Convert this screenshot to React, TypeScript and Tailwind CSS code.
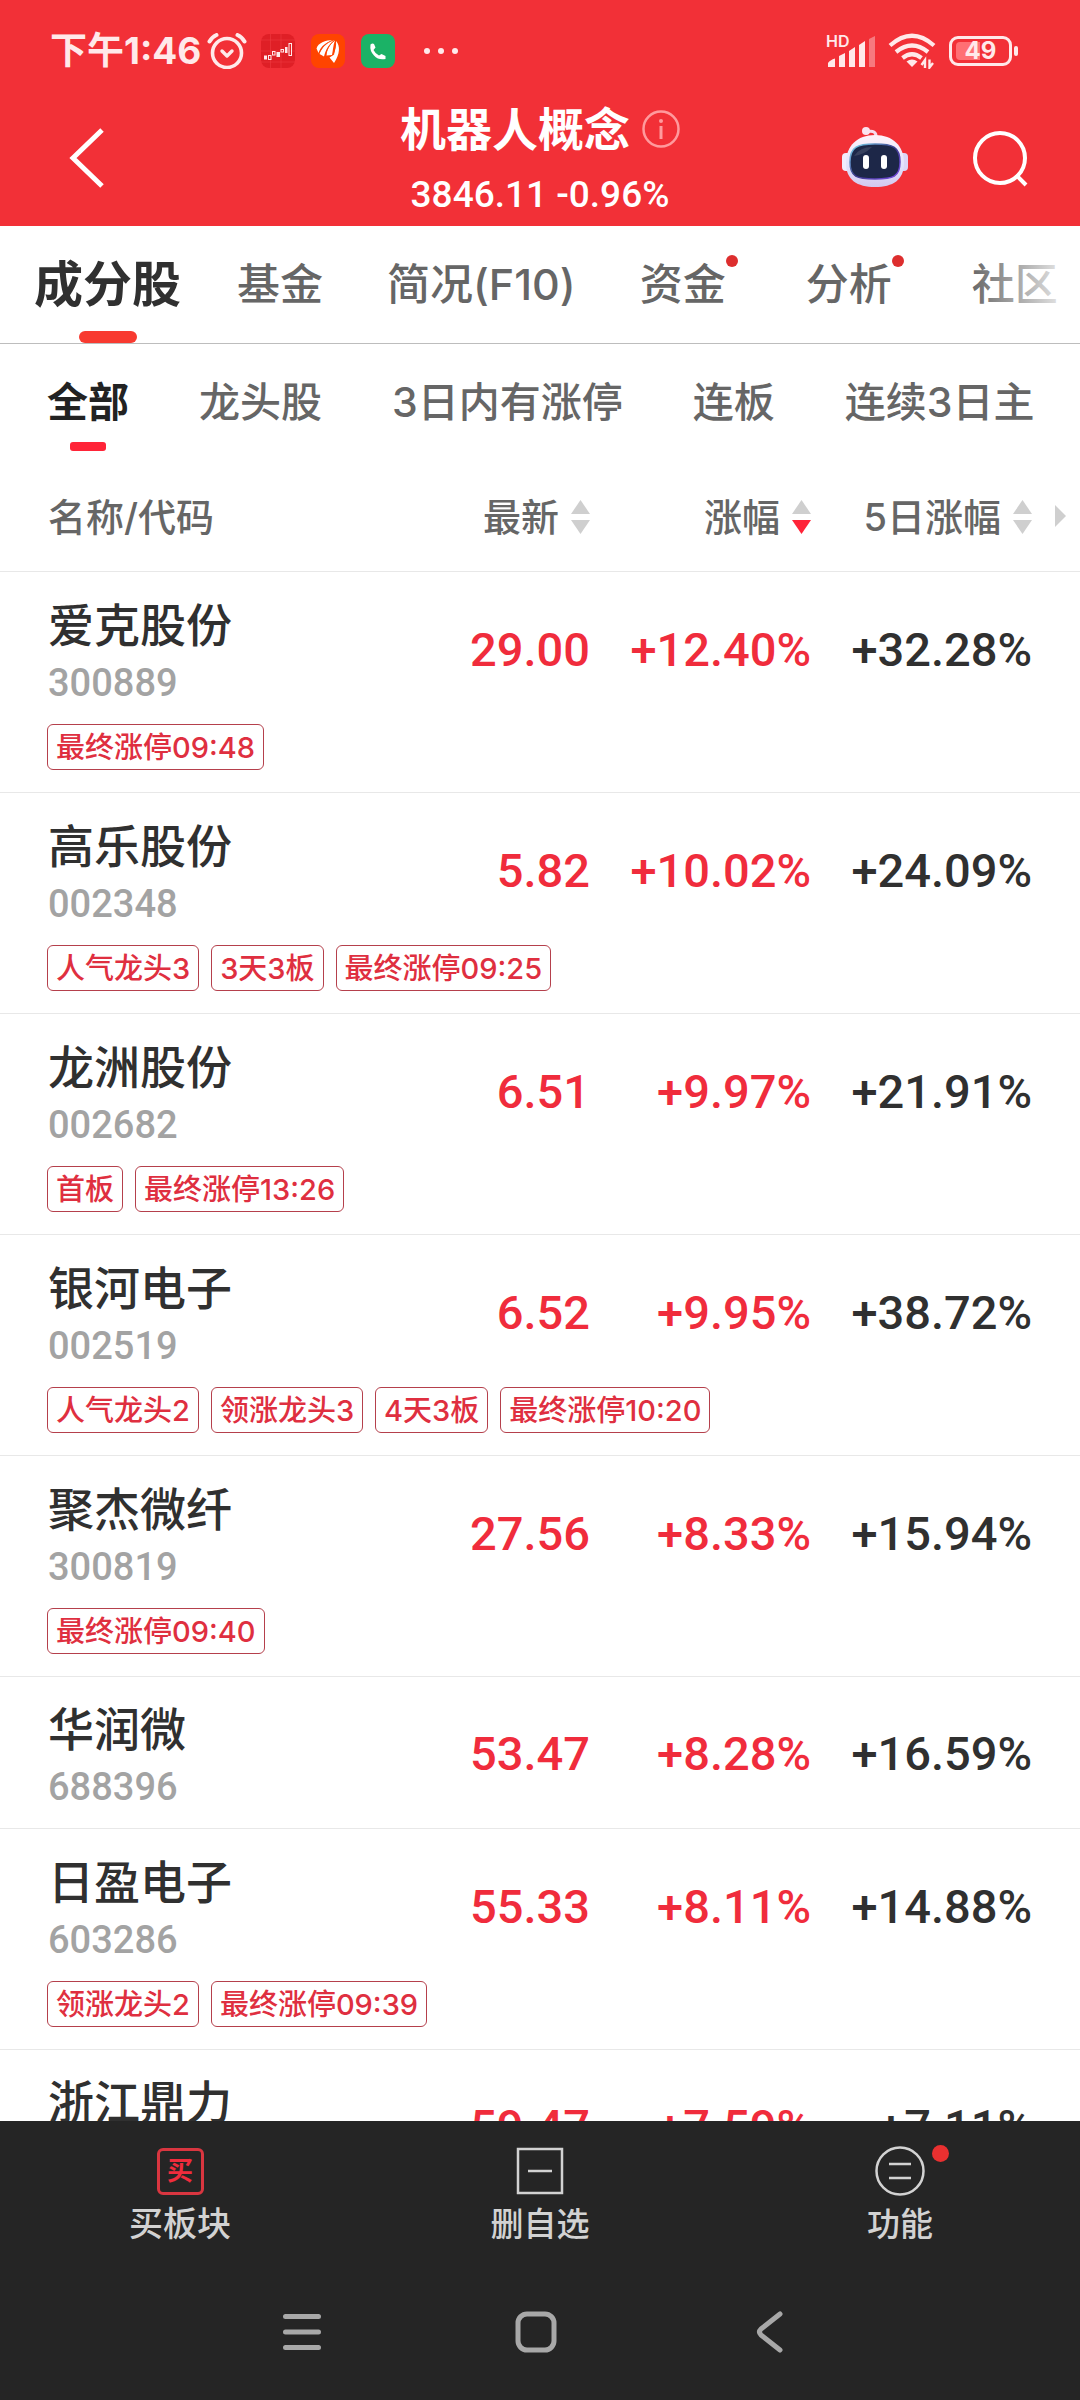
import { Fragment } from "react";
import { clsx } from "clsx";

interface Stock {
    name: string;
    code?: string;
    price: string;
    change: string;
    fiveDay: string;
    tags: string[];
}

const STOCKS: Stock[] = [
    { name: "爱克股份", code: "300889", price: "29.00", change: "+12.40%", fiveDay: "+32.28%", tags: ["最终涨停09:48"] },
    { name: "高乐股份", code: "002348", price: "5.82", change: "+10.02%", fiveDay: "+24.09%", tags: ["人气龙头3", "3天3板", "最终涨停09:25"] },
    { name: "龙洲股份", code: "002682", price: "6.51", change: "+9.97%", fiveDay: "+21.91%", tags: ["首板", "最终涨停13:26"] },
    { name: "银河电子", code: "002519", price: "6.52", change: "+9.95%", fiveDay: "+38.72%", tags: ["人气龙头2", "领涨龙头3", "4天3板", "最终涨停10:20"] },
    { name: "聚杰微纤", code: "300819", price: "27.56", change: "+8.33%", fiveDay: "+15.94%", tags: ["最终涨停09:40"] },
    { name: "华润微", code: "688396", price: "53.47", change: "+8.28%", fiveDay: "+16.59%", tags: [] },
    { name: "日盈电子", code: "603286", price: "55.33", change: "+8.11%", fiveDay: "+14.88%", tags: ["领涨龙头2", "最终涨停09:39"] },
    { name: "浙江鼎力", price: "59.47", change: "+7.59%", fiveDay: "+7.11%", tags: [] },
];

const TABS = [
    { label: "成分股", active: true },
    { label: "基金" },
    { label: "简况(F10)" },
    { label: "资金", dot: true },
    { label: "分析", dot: true },
    { label: "社区" },
];

const FILTERS = ["全部", "龙头股", "3日内有涨停", "连板", "连续3日主"];

// ─────────────────────────────────────────
// Status bar
// ─────────────────────────────────────────
function StatusBar() {
    return (
        <div className="flex h-[102px] items-center justify-between pl-[50px] pr-[62px] text-[#ffe9ea]">
            <div className="flex items-center">
                <span className="text-[37px] leading-10 font-bold">下午1:46</span>
                <svg className="ml-1.5 h-9 w-10" viewBox="0 0 40 36" fill="none" stroke="currentColor" strokeLinecap="round">
                    <circle cx="20" cy="20" r="14.5" strokeWidth="3.6" />
                    <path d="M15 18l5 5 5-5" strokeWidth="3.4" strokeLinejoin="round" />
                    <path d="M2.500 8.500Q5 4 9.500 2M37.500 8.500Q35 4 30.500 2" strokeWidth="4" />
                </svg>
                <svg className="ml-[14px] size-[34px]" viewBox="0 0 34 34">
                    <rect width="34" height="34" rx="8" fill="#df1f26" />
                    <path d="M9.500 0v34M0 6h34M0 17h34M0 28h34M20 0v34" stroke="#ee3b3f" strokeWidth=".6" />
                    <g fill="#ffe9ea">
                        <rect x="3" y="21.500" width="3" height="4" />
                        <rect x="15.500" y="18" width="3.500" height="5" />
                        <rect x="24" y="13" width="2.500" height="6" />
                    </g>
                    <g fill="none" stroke="#ffe9ea" strokeWidth="1">
                        <rect x="7.500" y="21.500" width="2.500" height="4" />
                        <rect x="11.500" y="17.500" width="2.500" height="3.500" />
                        <rect x="20" y="15.500" width="2.500" height="2.500" />
                        <rect x="28" y="9.500" width="2.500" height="12" />
                    </g>
                </svg>
                <svg className="ml-4 size-[34px]" viewBox="0 0 34 34">
                    <rect width="34" height="34" rx="8" fill="#ff4400" />
                    <g fill="#fff">
                        <path d="M5.500 14.500C7 9 14 6 22.500 6 15 8 10 12 7.500 19z" />
                        <path d="M8.500 20C11 13 16 8 23.500 6 18 10 15 15 13 22.500z" />
                        <path d="M15.500 21.500C16 15 19 9.500 24 6.500c-2 5-2 10-3 14.500z" />
                        <path d="M25 7C29.500 12 29 20 23 29l-4.500-5.500L22.500 21C24.500 16 25.500 11.500 25 7z" />
                    </g>
                    <path d="M22.500 6C15 9 11 13 8 19.500M23.500 6.500C18 11 15.500 16 14.500 22M24.500 7q-.5 7-2 14" fill="none" stroke="#ff4400" strokeWidth=".8" />
                </svg>
                <svg className="ml-4 size-[34px]" viewBox="0 0 34 34">
                    <rect width="34" height="34" rx="8" fill="#1bb266" />
                    <path d="M9.500 10.500q2-1.500 3.500-.5l1.500 3.500-2 2.500q2 4 5.500 5.500l2.500-1.500 4 2v3q-7 1.500-11.500-3.500-4.500-4.500-3.500-11z" fill="#fff" />
                </svg>
                <span className="ml-[29px] flex gap-2">
                    <i className="size-[6px] rounded-full bg-current" />
                    <i className="size-[6px] rounded-full bg-current" />
                    <i className="size-[6px] rounded-full bg-current" />
                </span>
            </div>
            <div className="flex items-center">
                <div className="relative">
                    <svg className="h-[34px] w-[50px]" viewBox="0 0 50 34" fill="currentColor">
                        <path d="M2 33v-4q2-3 7-4.500V33zM13 33V22l6-3v14zM23 33V17l6-4v20zM33 33V11l6-4v26z" />
                        <path d="M43 33V5l6-3v31z" opacity=".4" />
                    </svg>
                    <span className="absolute top-0 left-0 text-[16px] leading-[14px] font-semibold">HD</span>
                </div>
                <svg className="ml-3 h-[36px] w-[48px]" viewBox="0 0 48 36" fill="none" stroke="currentColor">
                    <path d="M2 12.500Q24-7 46 12.500M8 19q16-13 32 0M14.500 25q9.500-7.500 19 0" strokeWidth="4.200" />
                    <path d="M24 34l-5.500-5.500q5.500-4 11 0z" fill="currentColor" stroke="none" />
                    <path d="M37 35v-8l-3.500 5M41.500 26.500v8L45 30" strokeWidth="2.400" />
                </svg>
                <div className="relative ml-[13px] flex h-[30px] w-[63px] items-center justify-center rounded-[9px] border-[3px] border-current">
                    <i className="absolute top-[3px] left-1 h-[18px] w-6 rounded-l-[4px] bg-[#ff6f74]" />
                    <span className="relative text-[24px] leading-none font-bold">49</span>
                </div>
                <i className="ml-[2px] h-[10px] w-1 rounded-full bg-current" />
            </div>
        </div>
    );
}

function RobotIcon() {
    return (
        <svg className="h-[64px] w-[66px]" viewBox="0 0 66 64">
            <defs>
                <linearGradient id="shell" x1="0" y1="0" x2="0" y2="1">
                    <stop offset="0" stopColor="#fff3fa" />
                    <stop offset=".6" stopColor="#e2e2fb" />
                    <stop offset="1" stopColor="#d3c8ee" />
                </linearGradient>
                <linearGradient id="rim" x1="0" y1="0" x2="1" y2="1">
                    <stop offset="0" stopColor="#7fdcf0" />
                    <stop offset=".5" stopColor="#3c3a8c" />
                    <stop offset="1" stopColor="#7b4be6" />
                </linearGradient>
            </defs>
            <path d="M24 6q11-3 10 6" fill="none" stroke="#f6dcec" strokeWidth="3" />
            <circle cx="24" cy="5" r="4" fill="#fbe4f0" />
            <rect x="0" y="27" width="10" height="18" rx="4" fill="#f1ecfc" />
            <rect x="56" y="27" width="10" height="18" rx="4" fill="#dcd6f6" />
            <path d="M33 9c18 0 29 11 29 28S51 61 33 61 4 54 4 37 15 9 33 9z" fill="url(#shell)" />
            <path d="M33 18c18 0 25 3 25 18s-7 17-25 17S8 51 8 36s7-18 25-18z" fill="#1d2748" stroke="url(#rim)" strokeWidth="1.500" />
            <path d="M12 30q6-9 18-9-8 8-18 9z" fill="#fff" opacity=".12" />
            <rect x="21" y="29" width="6" height="14" rx="3" fill="#fff" />
            <rect x="39" y="29" width="6" height="14" rx="3" fill="#fff" />
        </svg>
    );
}

function Header() {
    return (
        <header className="shrink-0 bg-[#f23037] text-white">
            <StatusBar />
            <div className="grid grid-cols-[1fr_auto_1fr] items-center pb-3">
                <button type="button" aria-label="返回" className="ml-[66px] w-fit">
                    <svg className="h-[62px] w-10" viewBox="0 0 40 62" fill="none" stroke="currentColor" strokeWidth="5">
                        <path d="M36 3L7 31l29 28" />
                    </svg>
                </button>
                <div className="flex flex-col items-center">
                    <div className="flex h-[54px] items-center gap-3">
                        <h1 className="text-[46px] leading-[54px] font-bold">机器人概念</h1>
                        <button type="button" aria-label="说明">
                            <svg className="size-[38px]" viewBox="0 0 38 38" fill="none" stroke="#ff9a9d" strokeWidth="2.500">
                                <circle cx="19" cy="19" r="17.500" />
                                <path d="M19 16v13" strokeWidth="3" />
                                <circle cx="19" cy="11" r="2" fill="#ff9a9d" stroke="none" />
                            </svg>
                        </button>
                    </div>
                    <p className="mt-5 h-[38px] font-['Roboto',sans-serif] text-[37px] leading-[38px] font-medium">3846.11 -0.96%</p>
                </div>
                <div className="flex items-center justify-end gap-[64px] pr-[51px]">
                    <button type="button" aria-label="智能助手">
                        <RobotIcon />
                    </button>
                    <button type="button" aria-label="搜索">
                        <svg className="size-[57px]" viewBox="0 0 57 57" fill="none" stroke="currentColor" strokeWidth="4">
                            <circle cx="28" cy="28" r="25" />
                            <path d="M44 45l10 10" />
                        </svg>
                    </button>
                </div>
            </div>
        </header>
    );
}

// ─────────────────────────────────────────
// Tabs and filters
// ─────────────────────────────────────────
function Tabs() {
    return (
        <nav className="relative flex h-[118px] shrink-0 items-center gap-16 overflow-hidden border-b border-[#bdbdbd] pl-[34px] whitespace-nowrap">
            {TABS.map((tab) => (
                <button
                    key={tab.label}
                    type="button"
                    className={clsx(
                        "relative flex h-full items-center",
                        tab.active ? "-mr-2 text-[49px] font-bold text-[#303030]" : "text-[43px] font-medium text-[#666]",
                        tab.dot && "pr-4",
                    )}
                >
                    {tab.label}
                    {tab.active && (
                        <span className="absolute bottom-0 left-1/2 h-3 w-[58px] -translate-x-1/2 rounded-full bg-[#f83a30]" />
                    )}
                    {tab.dot && <span className="absolute top-[29px] right-1 size-3 rounded-full bg-[#dd2e2e]" />}
                </button>
            ))}
            <span className="absolute inset-y-0 right-0 w-[110px] bg-gradient-to-r from-transparent to-white" />
        </nav>
    );
}

function Filters() {
    return (
        <div className="flex h-[118px] shrink-0 items-center gap-[70px] overflow-hidden pl-[47px] whitespace-nowrap">
            {FILTERS.map((label, i) => (
                <button
                    key={label}
                    type="button"
                    className={clsx(
                        "relative flex h-full items-center text-[41px]",
                        i === 0 ? "font-bold text-[#222]" : "font-medium text-[#666]",
                    )}
                >
                    {label}
                    {i === 0 && (
                        <span className="absolute bottom-[11px] left-1/2 h-[9px] w-9 -translate-x-1/2 rounded-[3px] bg-[#ff2438]" />
                    )}
                </button>
            ))}
        </div>
    );
}

// ─────────────────────────────────────────
// Stock table
// ─────────────────────────────────────────
function SortHeader({ label, sorted = false }: { label: string; sorted?: boolean }) {
    return (
        <button type="button" className="inline-flex items-center gap-3 whitespace-nowrap">
            {label}
            <svg className="h-[34px] w-[19px]" viewBox="0 0 19 34">
                <path d="M9.500 0L19 14H0z" fill="#cfcfcf" />
                <path d="M9.500 34L0 20h19z" className={sorted ? "fill-[#ff2438]" : "fill-[#cfcfcf]"} />
            </svg>
        </button>
    );
}

function StockTable() {
    return (
        <div className="min-h-0 flex-1 overflow-hidden">
            <table className="w-full table-fixed border-separate border-spacing-0">
                <thead>
                    <tr className="text-[38px] leading-[44px] text-[#666] *:border-b *:border-[#e8e8e8]">
                        <th className="h-[110px] pl-12 text-left font-medium">名称/代码</th>
                        <th className="w-[221px] text-right font-medium"><SortHeader label="最新" /></th>
                        <th className="w-[221px] text-right font-medium"><SortHeader label="涨幅" sorted /></th>
                        <th className="relative w-[269px] pr-12 text-right font-medium">
                            <SortHeader label="5日涨幅" />
                            <svg className="absolute top-[43px] right-[14px] h-[22px] w-[11px]" viewBox="0 0 11 22">
                                <path d="M0 0l11 11L0 22z" fill="#cfcfcf" />
                            </svg>
                        </th>
                    </tr>
                </thead>
                <tbody>
                    {STOCKS.map((stock) => (
                        <Fragment key={stock.name}>
                            <tr
                                className={clsx(
                                    "font-['Roboto',sans-serif] text-[47px] leading-[60px] font-medium",
                                    !stock.tags.length && "*:border-b *:border-[#e8e8e8]",
                                )}
                            >
                                <td className="h-[152px] pt-[3px] pl-12">
                                    <a href={`#${stock.name}`} className="block whitespace-nowrap">
                                        <span className="block font-['Inter','Noto_Sans_CJK_SC',sans-serif] text-[46px] leading-[56px] text-[#303030]">{stock.name}</span>
                                        <span className="mt-[10px] block h-10 text-[38px] leading-[40px] text-[#a3a3a3]">{stock.code}</span>
                                    </a>
                                </td>
                                <td className="pt-[3px] text-right text-[#f02c3c]">{stock.price}</td>
                                <td className="pt-[3px] text-right text-[#f02c3c]">{stock.change}</td>
                                <td className="pt-[3px] pr-12 text-right text-[#303030]">{stock.fiveDay}</td>
                            </tr>
                            {stock.tags.length > 0 && (
                                <tr>
                                    <td colSpan={4} className="border-b border-[#e8e8e8] pb-[22px] pl-[47px]">
                                        <div className="flex gap-3">
                                            {stock.tags.map((tag) => (
                                                <span key={tag} className="flex h-[46px] items-center rounded-md border border-[#b5404c] px-2 text-[29px] leading-none font-medium whitespace-nowrap text-[#df2f40]">
                                                    {tag}
                                                </span>
                                            ))}
                                        </div>
                                    </td>
                                </tr>
                            )}
                        </Fragment>
                    ))}
                </tbody>
            </table>
        </div>
    );
}

// ─────────────────────────────────────────
// Bottom actions and system navigation
// ─────────────────────────────────────────
function BottomBar() {
    return (
        <footer className="shrink-0 bg-[#252525] text-[#d2d2d2]">
            <div className="grid h-[146px] grid-cols-3 pt-[25px] font-medium">
                <button type="button" className="flex flex-col items-center gap-2 text-[34px] leading-10">
                    <span className="flex size-[50px] items-center justify-center">
                        <span className="flex size-[47px] items-center justify-center rounded-md border-[3px] border-[#d93640] text-[26px] leading-none font-bold text-[#f02c3c]">买</span>
                    </span>
                    买板块
                </button>
                <button type="button" className="flex flex-col items-center gap-2 text-[33px] leading-10">
                    <svg className="size-[50px]" viewBox="0 0 50 50" fill="none" stroke="currentColor" strokeWidth="2.500">
                        <path d="M3 3h44v44H3zM13 25h24" />
                    </svg>
                    删自选
                </button>
                <button type="button" className="flex flex-col items-center gap-2 text-[33px] leading-10">
                    <span className="relative">
                        <svg className="size-[50px]" viewBox="0 0 50 50" fill="none" stroke="currentColor" strokeWidth="2.500">
                            <circle cx="25" cy="25" r="23.500" />
                            <path d="M14 18h22M14 32h22" />
                        </svg>
                        <span className="absolute -top-px left-[57px] size-[17px] rounded-full bg-[#e93030]" />
                    </span>
                    功能
                </button>
            </div>
            <div className="flex h-[133px] items-center justify-center gap-[192px] pr-2 pb-1 text-[#a8a8a8]">
                <button type="button" aria-label="最近任务">
                    <svg className="size-[42px]" viewBox="0 0 42 42" fill="none" stroke="currentColor" strokeWidth="5" strokeLinecap="round">
                        <path d="M4.500 5.500h33M4.500 21h33M4.500 36.500h33" />
                    </svg>
                </button>
                <button type="button" aria-label="主屏幕">
                    <svg className="size-[42px]" viewBox="0 0 42 42" fill="none" stroke="currentColor" strokeWidth="5">
                        <rect x="3" y="3" width="36" height="36" rx="9" />
                    </svg>
                </button>
                <button type="button" aria-label="后退">
                    <svg className="size-[42px]" viewBox="0 0 42 42" fill="none" stroke="currentColor" strokeWidth="5" strokeLinecap="round" strokeLinejoin="round">
                        <path d="M31 3L12 18q-3 3 0 6l19 15" />
                    </svg>
                </button>
            </div>
        </footer>
    );
}

export default function App() {
    return (
        <div className="flex h-screen flex-col overflow-hidden bg-white font-['Inter','Noto_Sans_CJK_SC',sans-serif]">
            <Header />
            <Tabs />
            <Filters />
            <StockTable />
            <BottomBar />
        </div>
    );
}
